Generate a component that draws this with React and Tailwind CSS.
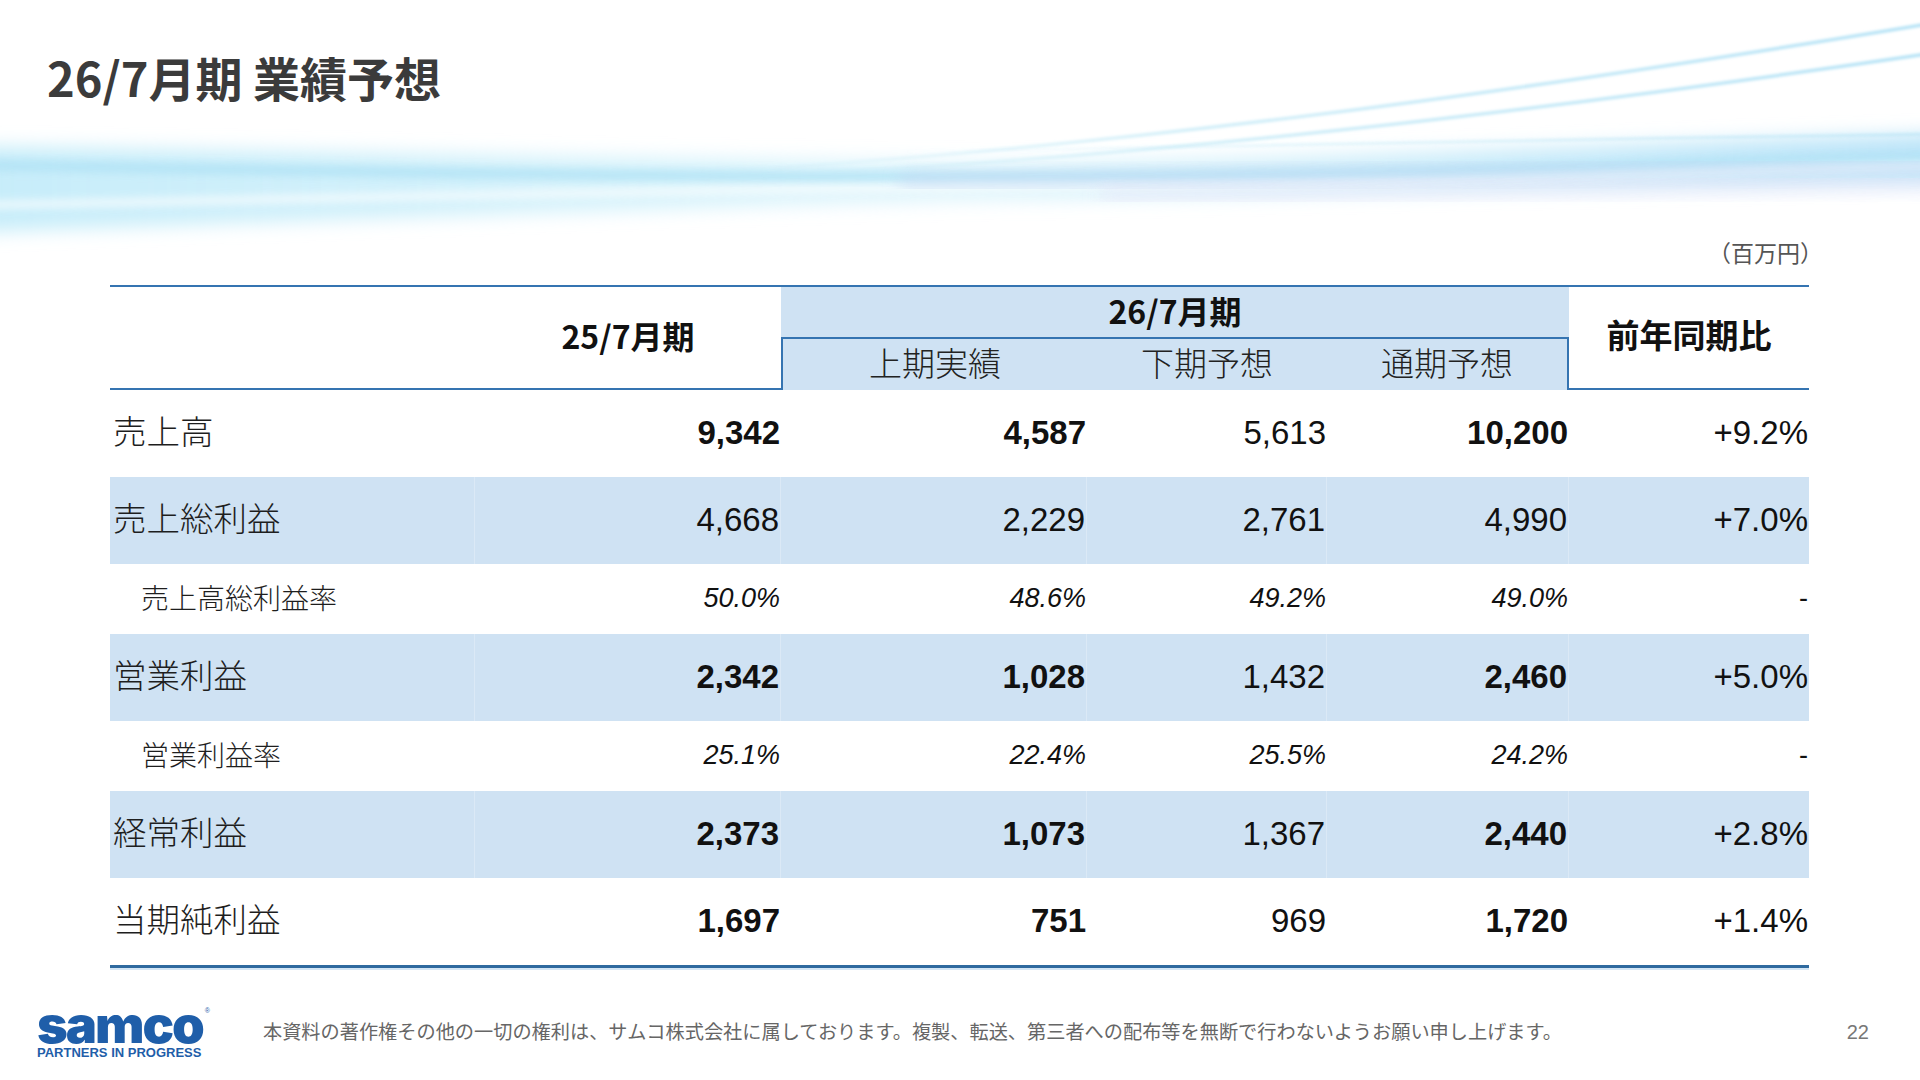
import React from 'react'

const jp = "font-['Noto_Sans_CJK_JP',sans-serif]"
const num = "font-['Liberation_Sans','Noto_Sans_CJK_JP',sans-serif]"

const rows = [
  { label: '売上高', values: ['9,342', '4,587', '5,613', '10,200', '+9.2%'], bold: [true, true, false, true, false] },
  { label: '売上総利益', values: ['4,668', '2,229', '2,761', '4,990', '+7.0%'], bold: [false, false, false, false, false], shade: true },
  { label: '売上高総利益率', values: ['50.0%', '48.6%', '49.2%', '49.0%', '-'], sub: true },
  { label: '営業利益', values: ['2,342', '1,028', '1,432', '2,460', '+5.0%'], bold: [true, true, false, true, false], shade: true },
  { label: '営業利益率', values: ['25.1%', '22.4%', '25.5%', '24.2%', '-'], sub: true },
  { label: '経常利益', values: ['2,373', '1,073', '1,367', '2,440', '+2.8%'], bold: [true, true, false, true, false], shade: true },
  { label: '当期純利益', values: ['1,697', '751', '969', '1,720', '+1.4%'], bold: [true, true, false, true, false] },
]

function Wave() {
  return (
    <svg className="absolute left-0 top-0" width="1920" height="260" viewBox="0 0 1920 260">
      <defs>
        <filter id="soft" x="-10%" y="-50%" width="120%" height="200%">
          <feGaussianBlur stdDeviation="9" />
        </filter>
        <filter id="mid" x="-10%" y="-50%" width="120%" height="200%">
          <feGaussianBlur stdDeviation="4" />
        </filter>
        <filter id="thin" x="-10%" y="-50%" width="120%" height="200%">
          <feGaussianBlur stdDeviation="1.6" />
        </filter>
        <linearGradient id="band" x1="0" y1="0" x2="1" y2="0">
          <stop offset="0" stopColor="#c4ecf9" stopOpacity="0.95" />
          <stop offset="0.5" stopColor="#d2f1fb" stopOpacity="0.75" />
          <stop offset="1" stopColor="#b8e3f8" stopOpacity="0.95" />
        </linearGradient>
        <linearGradient id="fade" x1="0" y1="0" x2="1" y2="0">
          <stop offset="0" stopColor="#bfe8f6" stopOpacity="0" />
          <stop offset="0.4" stopColor="#bfe8f6" stopOpacity="0.8" />
          <stop offset="1" stopColor="#a9def4" stopOpacity="1" />
        </linearGradient>
      </defs>
      {/* broad band */}
      <path
        d="M-20 146 C 300 150, 700 160, 1000 162 C 1300 160, 1600 142, 1940 134 L 1940 182 C 1600 186, 1300 196, 1000 200 C 700 206, 300 222, -20 232 Z"
        fill="url(#band)"
        filter="url(#soft)"
      />
      {/* brighter streaks inside the band */}
      <path d="M-20 165 C 400 172, 800 180, 1200 176 S 1700 160, 1940 158" stroke="#b0e2f5" strokeWidth="10" fill="none" filter="url(#mid)" opacity="0.85" />
      <path d="M-20 205 C 300 200, 700 188, 1100 186 S 1700 170, 1940 166" stroke="#ffffff" strokeWidth="8" fill="none" filter="url(#mid)" opacity="0.7" />
      <path d="M900 182 C 1300 176, 1600 172, 1940 168" stroke="#c3d6f3" strokeWidth="12" fill="none" filter="url(#soft)" opacity="0.7" />
      <path d="M1100 196 C 1400 190, 1700 186, 1940 184" stroke="#e3e3f8" strokeWidth="10" fill="none" filter="url(#soft)" opacity="0.8" />
      {/* thin rising lines */}
      <path d="M700 172 C 1100 150, 1500 95, 1940 22" stroke="url(#fade)" strokeWidth="3" fill="none" filter="url(#thin)" />
      <path d="M760 176 C 1150 158, 1550 110, 1940 52" stroke="url(#fade)" strokeWidth="3" fill="none" filter="url(#thin)" />
      <path d="M900 152 C 1300 146, 1600 138, 1940 134" stroke="url(#fade)" strokeWidth="2" fill="none" filter="url(#thin)" opacity="0.7" />
    </svg>
  )
}

function HeaderRow() {
  return (
    <div className="grid grid-cols-[365px_306px_306px_240px_242px_240px] grid-rows-[50px_53px] border-t-2 border-[#3574b1] text-[#111]">
      <div className="col-start-1 row-span-2 border-b-2 border-[#3574b1]" />
      <div className={`col-start-2 row-span-2 flex items-center justify-center border-b-2 border-[#3574b1] pb-[5px] text-[32px] font-bold ${jp}`}>
        25/7月期
      </div>
      <div className={`col-start-3 col-span-3 row-start-1 flex items-center justify-center bg-[#cfe2f3] pb-[4px] text-[32px] font-bold ${jp}`}>
        26/7月期
      </div>
      <div className={`col-start-3 row-start-2 flex items-center justify-center border-l-2 border-t-2 border-[#3574b1] bg-[#cfe2f3] pb-[3px] text-[33px] font-light text-[#222] ${jp}`}>
        上期実績
      </div>
      <div className={`col-start-4 row-start-2 flex items-center justify-center border-t-2 border-[#3574b1] bg-[#cfe2f3] pb-[3px] text-[33px] font-light text-[#222] ${jp}`}>
        下期予想
      </div>
      <div className={`col-start-5 row-start-2 flex items-center justify-center border-r-2 border-t-2 border-[#3574b1] bg-[#cfe2f3] pb-[3px] text-[33px] font-light text-[#222] ${jp}`}>
        通期予想
      </div>
      <div className={`col-start-6 row-start-1 row-span-2 flex items-center justify-center border-b-2 border-[#3574b1] pb-[5px] text-[33px] font-bold ${jp}`}>
        前年同期比
      </div>
    </div>
  )
}

function DataRow({ row }) {
  const height = row.sub ? 'h-[70px]' : 'h-[87px]'
  const bg = row.shade ? 'bg-[#cfe2f3]' : 'bg-transparent'
  const sep = row.shade ? 'border-r border-[#dbe9f6]' : ''
  return (
    <div className={`grid grid-cols-[365px_306px_306px_240px_242px_240px] ${height} ${bg}`}>
      <div
        className={`flex items-center ${sep} ${jp} text-[#1e1e1e] ${
          row.sub ? 'pb-[4px] pl-[31px] text-[28px] font-light' : 'pb-[6px] pl-[3px] text-[33.5px] font-light'
        }`}
      >
        {row.label}
      </div>
      {row.values.map((v, i) => {
        const last = i === row.values.length - 1
        let style
        if (row.sub) {
          style = v === '-' ? 'text-[27px]' : 'text-[27px] italic'
        } else {
          style = row.bold && row.bold[i] ? 'text-[33px] font-bold' : 'text-[33px]'
        }
        return (
          <div key={i} className={`flex items-center justify-end pb-[2px] pr-[1px] ${last ? '' : sep} ${num} ${style} text-[#111]`}>
            {v}
          </div>
        )
      })}
    </div>
  )
}

export default function App() {
  return (
    <div className="relative h-[1080px] w-[1920px] overflow-hidden bg-white">
      <Wave />
      <div className="relative flex h-full flex-col">
        <h1 className={`ml-[47px] mt-[53px] text-[47px] font-bold leading-none text-[#3b3b3b] ${jp}`}>
          26/7月期 業績予想
        </h1>

        <div className="ml-[110px] mt-[140px] w-[1699px]">
          <div className={`mb-[21px] -mr-[14px] text-right text-[23px] leading-[24px] text-[#555] ${jp}`}>
            （百万円）
          </div>
          <HeaderRow />
          {rows.map((row) => (
            <DataRow key={row.label} row={row} />
          ))}
          <div className="h-[3px] bg-[#2f6a9f]" />
          <div className="h-[2px] bg-[#d4e6f5]" />
        </div>

        <footer className="mt-[34px] flex items-center">
          <div className="ml-[37px] flex w-[180px] flex-col">
            <div className="flex h-[36px] items-end">
              <span className="origin-left scale-x-[1.05] font-['Inter',sans-serif] text-[50px] font-black leading-[30px] tracking-[-2px] text-[#1f5ea9]">
                samco
              </span>
              <span className="mb-[26px] ml-[10px] font-['Liberation_Sans',sans-serif] text-[7px] leading-none text-[#1f5ea9]">®</span>
            </div>
            <span className="mt-[6px] font-['Liberation_Sans',sans-serif] text-[13px] font-bold leading-none text-[#1f5ea9]">
              PARTNERS IN PROGRESS
            </span>
          </div>
          <p className={`ml-[46px] text-[19.2px] leading-none text-[#666] ${jp}`}>
            本資料の著作権その他の一切の権利は、サムコ株式会社に属しております。複製、転送、第三者への配布等を無断で行わないようお願い申し上げます。
          </p>
          <span className={`ml-auto mr-[51px] font-['Liberation_Sans',sans-serif] text-[20px] text-[#777]`}>22</span>
        </footer>
      </div>
    </div>
  )
}
